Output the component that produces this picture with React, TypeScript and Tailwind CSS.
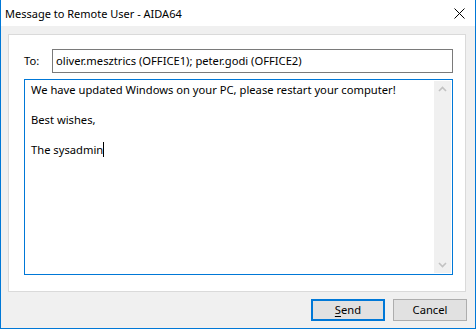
const FONT = "font-['Noto_Sans',sans-serif]";

function Chevron({ up }: { up?: boolean }) {
  return (
    <svg width="9" height="6" viewBox="0 0 9 6" className="text-[#c2c2c2]">
      <path
        d={up ? 'M1 5 L4.5 1.5 L8 5' : 'M1 1 L4.5 4.5 L8 1'}
        fill="none"
        stroke="currentColor"
        strokeWidth="1.6"
      />
    </svg>
  );
}

function CloseIcon() {
  return (
    <svg width="11" height="11" viewBox="0 0 11 11">
      <path d="M0.5 0.5 L10.5 10.5 M10.5 0.5 L0.5 10.5" stroke="#000" strokeWidth="1" fill="none" />
    </svg>
  );
}

export default function App() {
  return (
    <div className={`w-[476px] h-[329px] flex flex-col bg-[#f0f0f0] border-x border-b border-[#0078d7] text-black ${FONT}`}>
      {/* title bar */}
      <div className="h-[26px] shrink-0 bg-white flex items-center justify-between pl-[4px] pr-[10px]">
        <span className="text-[11px] leading-none">Message to Remote User - AIDA64</span>
        <CloseIcon />
      </div>

      <div className="flex-1 flex flex-col pt-[8px] pl-[7px] pr-[9px]">
        {/* panel */}
        <div className="h-[258px] bg-white border border-[#dadada] pt-[14px] pl-[15px] pr-[12px] flex flex-col text-[11.2px]">
          <div className="flex items-center h-[24px]">
            <span className="w-[28px]">To:</span>
            <div className="flex-1 h-[24px] border border-[#7a7a7a] flex items-center pl-[3px]">
              oliver.mesztrics (OFFICE1); peter.godi (OFFICE2)
            </div>
          </div>

          <div className="mt-[6px] h-[196px] border border-[#0078d7] flex">
            <div className="flex-1 pl-[6px] pt-[2px] leading-[15px]">
              <p>We have updated Windows on your PC, please restart your computer!</p>
              <p>&nbsp;</p>
              <p>Best wishes,</p>
              <p>&nbsp;</p>
              <p className="flex items-center">
                The sysadmin<span className="inline-block w-px h-[15px] bg-black" />
              </p>
            </div>
            <div className="w-[17px] my-px mr-px bg-[#f0f0f0] flex flex-col items-center justify-between py-[5px]">
              <Chevron up />
              <Chevron />
            </div>
          </div>
        </div>

        {/* buttons */}
        <div className="flex justify-end gap-[8px] mt-[7px] -mr-[1px] text-[11.2px]">
          <button className="w-[74px] h-[22px] bg-[#e1e1e1] border-2 border-[#0078d7] leading-none">
            <span className="underline underline-offset-2">S</span>end
          </button>
          <button className="w-[74px] h-[22px] bg-[#e1e1e1] border border-[#adadad] leading-none">
            Cancel
          </button>
        </div>
      </div>
    </div>
  );
}
